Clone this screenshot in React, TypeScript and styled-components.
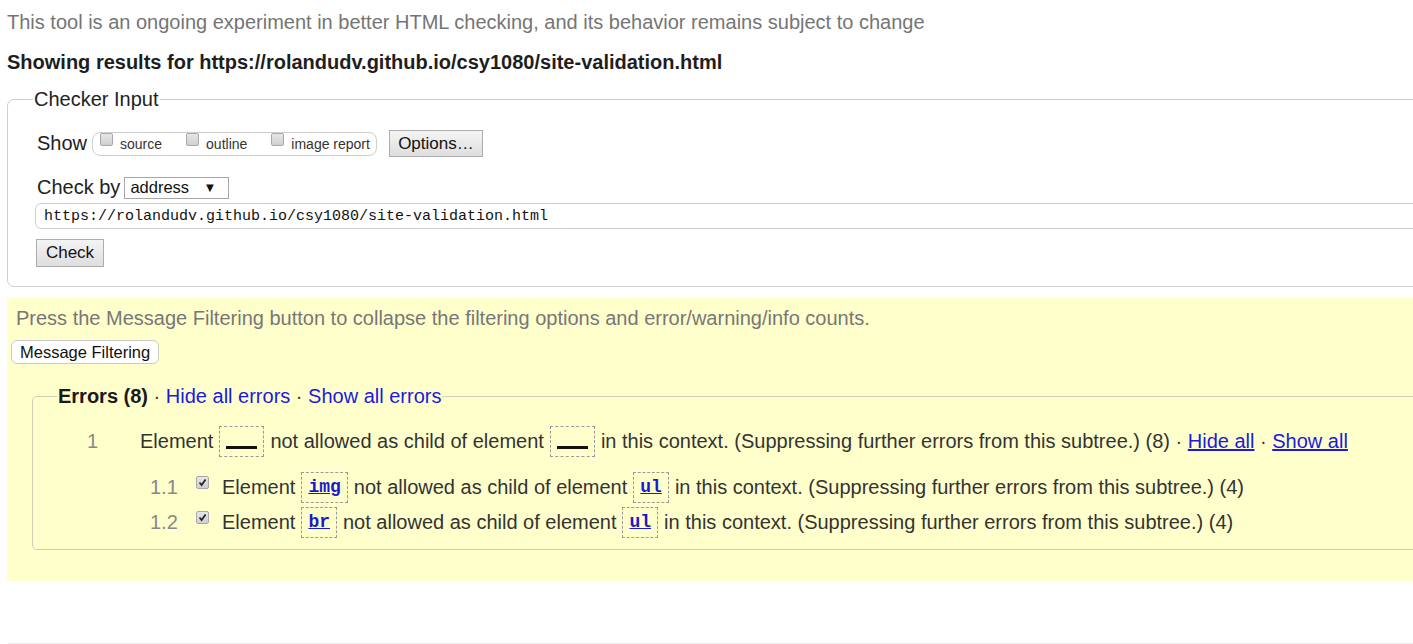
import React from "react";
import styled, { createGlobalStyle } from "styled-components";

const GlobalStyle = createGlobalStyle`
  html, body {
    margin: 0;
    padding: 0;
    overflow: hidden;
    background: #fff;
  }
  body {
    font-family: "Liberation Sans", Arial, sans-serif;
    color: #222;
  }
`;

const Page = styled.div`
  width: 1500px;
  padding-left: 7px;
`;

const Intro = styled.p`
  margin: 0;
  padding-top: 10px;
  font-size: 20px;
  line-height: 24px;
  color: #757575;
`;

const ResultsFor = styled.p`
  margin: 16px 0 0;
  font-size: 20px;
  line-height: 24px;
  font-weight: bold;
  color: #1e1e1e;
`;

const Fieldset = styled.fieldset`
  margin: 13px 0 0;
  border: 1px solid #cfcfcf;
  border-radius: 7px;
  padding: 0 0 19px 29px;
  min-width: 0;
`;

const Legend = styled.legend`
  font-size: 20px;
  line-height: 24px;
  padding: 0 1px;
  margin-left: -4px;
  color: #222;
`;

const FormRow = styled.div<{ $top: number }>`
  display: flex;
  align-items: center;
  gap: 5px;
  margin-top: ${(p) => p.$top}px;
  font-size: 20px;
  color: #222;
`;

const ToggleGroup = styled.div`
  display: flex;
  align-items: center;
  height: 22px;
  padding: 0 6px 0 7px;
  border: 1px solid #cfcfcf;
  border-radius: 8px;
  gap: 24px;
  margin-right: 7px;
`;

const Toggle = styled.label`
  display: flex;
  align-items: center;
  gap: 7px;
  font-size: 14px;
  color: #333;
`;

const Box = styled.span`
  display: inline-flex;
  align-items: center;
  justify-content: center;
  width: 11px;
  height: 11px;
  border: 1px solid #a9a9a9;
  border-radius: 2px;
  background: linear-gradient(#e6e6e6, #cfcfcf);
  position: relative;
  top: -4px;
  flex: none;
`;

const Button = styled.button<{ $w: number; $h: number; $size: number }>`
  width: ${(p) => p.$w}px;
  height: ${(p) => p.$h}px;
  padding: 0;
  font-family: "Liberation Sans", Arial, sans-serif;
  font-size: ${(p) => p.$size}px;
  color: #111;
  background: linear-gradient(#f4f4f4, #dedede);
  border: 1px solid #adadad;
  border-radius: 0;
`;

const Select = styled.div`
  display: flex;
  align-items: center;
  justify-content: space-between;
  box-sizing: border-box;
  width: 105px;
  height: 22px;
  margin-left: -1px;
  padding: 0 12px 0 5px;
  border: 1px solid #a6a6a6;
  background: #fff;
  font-size: 16.5px;
  color: #111;
  span {
    font-size: 13px;
  }
`;

const UrlInput = styled.div`
  box-sizing: border-box;
  height: 26px;
  margin: 4px 0 0 -2px;
  padding-left: 8px;
  display: flex;
  align-items: center;
  border: 1px solid #cfcfcf;
  border-radius: 6px;
  font-family: "Liberation Mono", "Courier New", monospace;
  font-size: 15px;
  color: #111;
`;

const CheckWrap = styled.div`
  margin: 10px 0 0 -1px;
`;

const Filtering = styled.section`
  margin-top: 11px;
  background: #ffffcc;
  padding: 8px 0 31px;
`;

const Hint = styled.p`
  margin: 0 0 0 9px;
  font-size: 20px;
  line-height: 24px;
  color: #777;
`;

const FilterButton = styled.button`
  margin: 10px 0 0 4px;
  height: 24px;
  padding: 0 8px;
  font-family: "Liberation Sans", Arial, sans-serif;
  font-size: 16.5px;
  color: #111;
  background: #fff;
  border: 1px solid #c8c8c8;
  border-radius: 6px;
`;

const ErrorSet = styled.fieldset`
  margin: 20px 0 0 25px;
  border: 1px solid #cfcfb8;
  border-radius: 5px;
  padding: 0 0 11px;
  min-width: 0;
`;

const ErrorLegend = styled.legend`
  font-size: 20px;
  line-height: 24px;
  margin-left: 24px;
  padding: 0 1px;
  color: #333;
  b {
    color: #1a1a1a;
  }
`;

const Link = styled.a<{ $under?: boolean }>`
  color: #1a1ae0;
  text-decoration: ${(p) => (p.$under ? "underline" : "none")};
  cursor: pointer;
`;

const Message = styled.div<{ $top: number; $pad: number }>`
  display: flex;
  align-items: center;
  height: 32px;
  margin-top: ${(p) => p.$top}px;
  padding-left: ${(p) => p.$pad}px;
  font-size: 20px;
  color: #333;
  white-space: pre;
`;

const Num = styled.span<{ $w: number }>`
  width: ${(p) => p.$w}px;
  flex: none;
  color: #888;
`;

const Code = styled.span`
  display: inline-flex;
  align-items: center;
  box-sizing: border-box;
  height: 31px;
  padding: 0 6px;
  margin: 0 6px;
  border: 1px dashed #9a9a9a;
  font-family: "Liberation Mono", "Courier New", monospace;
  font-size: 18px;
  font-weight: bold;
  color: #000;
  a {
    color: #1a1acc;
    text-decoration: underline;
  }
`;

const Blank = styled.span`
  display: inline-block;
  width: 31px;
  height: 3px;
  margin-top: 12px;
  background: #111;
`;

const MsgBox = styled(Box)`
  margin-right: 13px;
  top: -5px;
`;

const BottomRule = styled.div`
  margin-top: 62px;
  margin-left: 1px;
  border-top: 1px solid #ececec;
`;

const Tick = () => (
  <svg width="9" height="9" viewBox="0 0 9 9">
    <path d="M1.5 4.5 L3.6 7 L7.6 1.5" fill="none" stroke="#222" strokeWidth="1.7" />
  </svg>
);

const subMessages = [
  { num: "1.1", child: "img" },
  { num: "1.2", child: "br" },
];

export default function App() {
  return (
    <Page>
      <GlobalStyle />
      <Intro>
        This tool is an ongoing experiment in better HTML checking, and its behavior remains
        subject to change
      </Intro>
      <ResultsFor>Showing results for https://rolandudv.github.io/csy1080/site-validation.html</ResultsFor>

      <Fieldset>
        <Legend>Checker Input</Legend>
        <FormRow $top={19}>
          Show
          <ToggleGroup>
            <Toggle>
              <Box />
              source
            </Toggle>
            <Toggle>
              <Box />
              outline
            </Toggle>
            <Toggle>
              <Box />
              image report
            </Toggle>
          </ToggleGroup>
          <Button $w={94} $h={27} $size={17}>
            Options…
          </Button>
        </FormRow>
        <FormRow $top={19}>
          Check by
          <Select>
            address
            <span>▼</span>
          </Select>
        </FormRow>
        <UrlInput>https://rolandudv.github.io/csy1080/site-validation.html</UrlInput>
        <CheckWrap>
          <Button $w={68} $h={28} $size={17}>
            Check
          </Button>
        </CheckWrap>
      </Fieldset>

      <Filtering>
        <Hint>
          Press the Message Filtering button to collapse the filtering options and
          error/warning/info counts.
        </Hint>
        <FilterButton>Message Filtering</FilterButton>
        <ErrorSet>
          <ErrorLegend>
            <b>Errors (8)</b> · <Link>Hide all errors</Link> · <Link>Show all errors</Link>
          </ErrorLegend>
          <Message $top={17} $pad={54}>
            <Num $w={53}>1</Num>
            Element
            <Code>
              <Blank />
            </Code>
            not allowed as child of element
            <Code>
              <Blank />
            </Code>
            in this context. (Suppressing further errors from this subtree.) (8) ·{" "}
            <Link $under>Hide all</Link> · <Link $under>Show all</Link>
          </Message>
          {subMessages.map((m, i) => (
            <Message key={m.num} $top={i === 0 ? 14 : 3} $pad={117}>
              <Num $w={46}>{m.num}</Num>
              <MsgBox>
                <Tick />
              </MsgBox>
              Element
              <Code>
                <a>{m.child}</a>
              </Code>
              not allowed as child of element
              <Code>
                <a>ul</a>
              </Code>
              in this context. (Suppressing further errors from this subtree.) (4)
            </Message>
          ))}
        </ErrorSet>
      </Filtering>
      <BottomRule />
    </Page>
  );
}
